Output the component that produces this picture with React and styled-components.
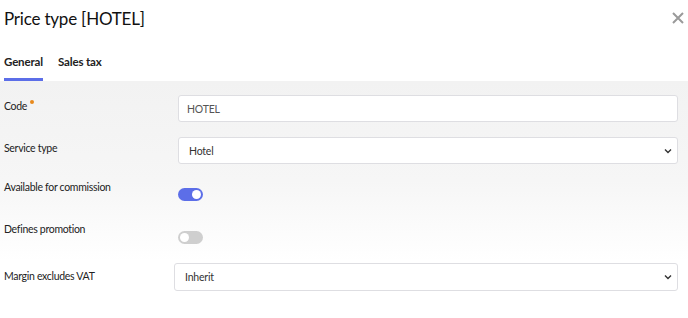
import React from 'react';
import styled, { createGlobalStyle } from 'styled-components';

const GlobalStyle = createGlobalStyle`
  html, body { margin: 0; padding: 0; background: #fff; }
  body { font-family: 'Lato', 'Liberation Sans', sans-serif; color: #222; }
`;

const Dialog = styled.div`
  width: 688px;
  height: 318px;
  overflow: hidden;
  background: #fff;
`;

const Header = styled.div`
  display: flex;
  align-items: center;
  justify-content: space-between;
  height: 36px;
  padding: 0 4px;
`;

const Title = styled.h1`
  margin: 0;
  font-size: 17px;
  font-weight: 400;
  color: #111;
  letter-spacing: -0.2px;
`;

const Close = styled.button`
  border: 0;
  background: none;
  padding: 0;
  width: 12px;
  height: 12px;
  cursor: pointer;
  display: flex;
`;

const Tabs = styled.div`
  display: flex;
  gap: 15px;
  padding: 19px 4px 0;
`;

const Tab = styled.div`
  font-size: 11.5px;
  font-weight: 700;
  letter-spacing: -0.15px;
  color: #222;
  padding-bottom: 10px;
  border-bottom: 3px solid ${p => (p.$active ? '#5c6ee8' : 'transparent')};
`;

const Body = styled.div`
  background: linear-gradient(#f2f2f2 0px, #f6f6f6 100px, #ffffff 180px);
  padding: 14px 10px 0 4px;
  height: 240px;
`;

const Row = styled.div`
  display: grid;
  grid-template-columns: 170px 1fr;
  align-items: start;
  height: ${p => p.$h}px;
`;

const Label = styled.div`
  font-size: 10.5px;
  letter-spacing: -0.3px;
  line-height: 20px;
  color: #222;
  padding-top: ${p => p.$pt || 1}px;
`;

const Required = styled.span`
  display: inline-block;
  width: 4px;
  height: 4px;
  border-radius: 50%;
  background: #e8891c;
  margin-left: 3px;
  vertical-align: 6px;
`;

const Field = styled.div`
  position: relative;
  margin-left: ${p => (p.$inset ? 4 : 0)}px;
`;

const TextInput = styled.input`
  box-sizing: border-box;
  width: 100%;
  height: 27px;
  border: 1px solid #dedee2;
  border-radius: 3px;
  background: #fff;
  padding: 0 8px;
  font-family: inherit;
  font-size: 10.5px;
  letter-spacing: -0.2px;
  color: #555;
  outline: none;
`;

const Select = styled.select`
  box-sizing: border-box;
  appearance: none;
  width: 100%;
  height: ${p => p.$h || 27}px;
  border: 1px solid #dedee2;
  border-radius: 3px;
  background: #fff;
  padding: 0 10px;
  font-family: inherit;
  font-size: 10.5px;
  letter-spacing: -0.2px;
  color: #333;
  outline: none;
`;

const Chevron = styled.svg`
  position: absolute;
  right: 6px;
  top: 50%;
  transform: translateY(-50%);
  pointer-events: none;
`;

const Toggle = styled.div`
  box-sizing: border-box;
  width: 25px;
  height: 13px;
  border-radius: 7px;
  margin-top: ${p => p.$mt}px;
  background: ${p => (p.$on ? '#5c6ee8' : '#cfcfcf')};
  position: relative;

  &::after {
    content: '';
    position: absolute;
    top: 2px;
    left: ${p => (p.$on ? 14 : 2)}px;
    width: 9px;
    height: 9px;
    border-radius: 50%;
    background: #fff;
  }
`;

const ChevronIcon = () => (
  <Chevron width="8" height="6" viewBox="0 0 8 6">
    <path d="M1 1.5 L4 4.5 L7 1.5" fill="none" stroke="#333" strokeWidth="1.4" />
  </Chevron>
);

export default function App() {
  return (
    <Dialog>
      <GlobalStyle />
      <Header>
        <Title>Price type [HOTEL]</Title>
        <Close aria-label="Close">
          <svg width="12" height="12" viewBox="0 0 12 12">
            <path d="M1 1 L11 11 M11 1 L1 11" stroke="#9a9a9a" strokeWidth="2" />
          </svg>
        </Close>
      </Header>
      <Tabs>
        <Tab $active>General</Tab>
        <Tab>Sales tax</Tab>
      </Tabs>
      <Body>
        <Row $h={42}>
          <Label>Code<Required /></Label>
          <Field $inset>
            <TextInput defaultValue="HOTEL" />
          </Field>
        </Row>
        <Row $h={39}>
          <Label>Service type</Label>
          <Field $inset>
            <Select defaultValue="Hotel">
              <option>Hotel</option>
            </Select>
            <ChevronIcon />
          </Field>
        </Row>
        <Row $h={42}>
          <Label>Available for commission</Label>
          <Field $inset>
            <Toggle $on $mt={12} />
          </Field>
        </Row>
        <Row $h={45}>
          <Label>Defines promotion</Label>
          <Field $inset>
            <Toggle $mt={13} />
          </Field>
        </Row>
        <Row $h={28}>
          <Label $pt={3}>Margin excludes VAT</Label>
          <Field>
            <Select $h={28} defaultValue="Inherit">
              <option>Inherit</option>
            </Select>
            <ChevronIcon />
          </Field>
        </Row>
      </Body>
    </Dialog>
  );
}
